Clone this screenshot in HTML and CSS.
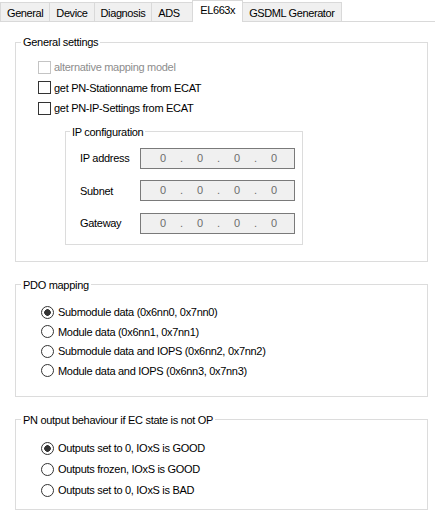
FILE: index.html
```html
<!DOCTYPE html>
<html lang="en">
<head>
    <meta charset="UTF-8">
    <title>EL663x</title>
    <link rel="stylesheet" href="styles.css">
</head>
<body>
    <div class="tabs">
        <div class="tab">General</div>
        <div class="tab">Device</div>
        <div class="tab">Diagnosis</div>
        <div class="tab">ADS</div>
        <div class="tab active">EL663x</div>
        <div class="tab">GSDML Generator</div>
    </div>

    <div class="page">
        <fieldset class="group general">
            <legend>General settings</legend>
            <label class="check disabled"><input type="checkbox" disabled>alternative mapping model</label>
            <label class="check"><input type="checkbox">get PN-Stationname from ECAT</label>
            <label class="check"><input type="checkbox">get PN-IP-Settings from ECAT</label>

            <fieldset class="group ip">
                <legend>IP configuration</legend>
                <div class="ip-row">
                    <span class="ip-label">IP address</span>
                    <div class="ip-box"><span>0</span><i>.</i><span>0</span><i>.</i><span>0</span><i>.</i><span>0</span></div>
                </div>
                <div class="ip-row">
                    <span class="ip-label">Subnet</span>
                    <div class="ip-box"><span>0</span><i>.</i><span>0</span><i>.</i><span>0</span><i>.</i><span>0</span></div>
                </div>
                <div class="ip-row">
                    <span class="ip-label">Gateway</span>
                    <div class="ip-box"><span>0</span><i>.</i><span>0</span><i>.</i><span>0</span><i>.</i><span>0</span></div>
                </div>
            </fieldset>
        </fieldset>

        <fieldset class="group pdo">
            <legend>PDO mapping</legend>
            <label class="radio"><input type="radio" name="pdo" checked>Submodule data (0x6nn0, 0x7nn0)</label>
            <label class="radio"><input type="radio" name="pdo">Module data (0x6nn1, 0x7nn1)</label>
            <label class="radio"><input type="radio" name="pdo">Submodule data and IOPS (0x6nn2, 0x7nn2)</label>
            <label class="radio"><input type="radio" name="pdo">Module data and IOPS (0x6nn3, 0x7nn3)</label>
        </fieldset>

        <fieldset class="group output">
            <legend>PN output behaviour if EC state is not OP</legend>
            <label class="radio"><input type="radio" name="out" checked>Outputs set to 0, IOxS is GOOD</label>
            <label class="radio"><input type="radio" name="out">Outputs frozen, IOxS is GOOD</label>
            <label class="radio"><input type="radio" name="out">Outputs set to 0, IOxS is BAD</label>
        </fieldset>
    </div>
</body>
</html>
```

FILE: styles.css
```css
* {
    box-sizing: border-box;
}

body {
    margin: 0;
    background-color: #fff;
    font-family: "Liberation Sans", Arial, sans-serif;
    font-size: 11px;
    letter-spacing: -0.3px;
    color: #000;
}

/* tab strip */
.tabs {
    display: flex;
    align-items: flex-end;
    height: 22px;
    border-bottom: 1px solid #d9d9d9;
    letter-spacing: -0.4px;
}

.tab {
    min-width: 42px;
    height: 19px;
    padding: 2px 6px 0;
    line-height: 16px;
    background-color: #f0f0f0;
    border: 1px solid #d9d9d9;
    border-bottom: none;
    margin-right: -1px;
    white-space: nowrap;
}

.tab.active {
    height: 22px;
    padding: 1px 7px 0;
    line-height: 17px;
    margin-bottom: -1px;
    background-color: #fff;
}

/* page content */
.page {
    padding: 13px 7px 0 15px;
}

.group {
    margin: 0;
    min-width: 0;
    border: 1px solid #dcdcdc;
}

.group legend {
    padding: 0 2px;
    line-height: 14px;
}

.general {
    padding: 8px 0 16px 5px;
}

.pdo {
    margin-top: 16px;
    padding: 11px 0 15px 5px;
}

.output {
    margin-top: 16px;
    padding: 11px 0 8px 5px;
}

.check,
.radio {
    display: flex;
    align-items: center;
    height: 20.5px;
}

.check {
    margin-left: 17px;
}

.radio {
    height: 19.5px;
    margin-left: 20px;
}

.output .radio {
    height: 21px;
}

.check input,
.radio input {
    appearance: none;
    width: 13px;
    height: 13px;
    margin: 0 3px 0 0;
    border: 1px solid #333;
    background-color: #fff;
    flex: none;
}

.radio input {
    margin-right: 4px;
    border-radius: 50%;
}

.radio input:checked {
    background: radial-gradient(circle, #333 0 3px, #fff 3.6px);
}

.check.disabled {
    color: #8d8d8d;
}

.check.disabled input {
    border-color: #c4c4c4;
}

/* IP configuration */
.ip {
    width: 238px;
    margin: 6px 0 0 44px;
    padding: 9px 0 10px 4px;
}

.ip-row {
    display: flex;
    align-items: center;
    height: 21px;
    margin-left: 10px;
}

.ip-row + .ip-row {
    margin-top: 11.5px;
}

.ip-label {
    width: 60px;
}

.ip-box {
    display: flex;
    width: 155px;
    height: 21px;
    padding-left: 7px;
    line-height: 19px;
    background-color: #f0f0f0;
    border: 1px solid #7a7a7a;
    color: #6d6d6d;
}

.ip-box span {
    width: 30px;
    text-align: center;
}

.ip-box i {
    width: 7px;
    font-style: normal;
    text-align: center;
}
```
